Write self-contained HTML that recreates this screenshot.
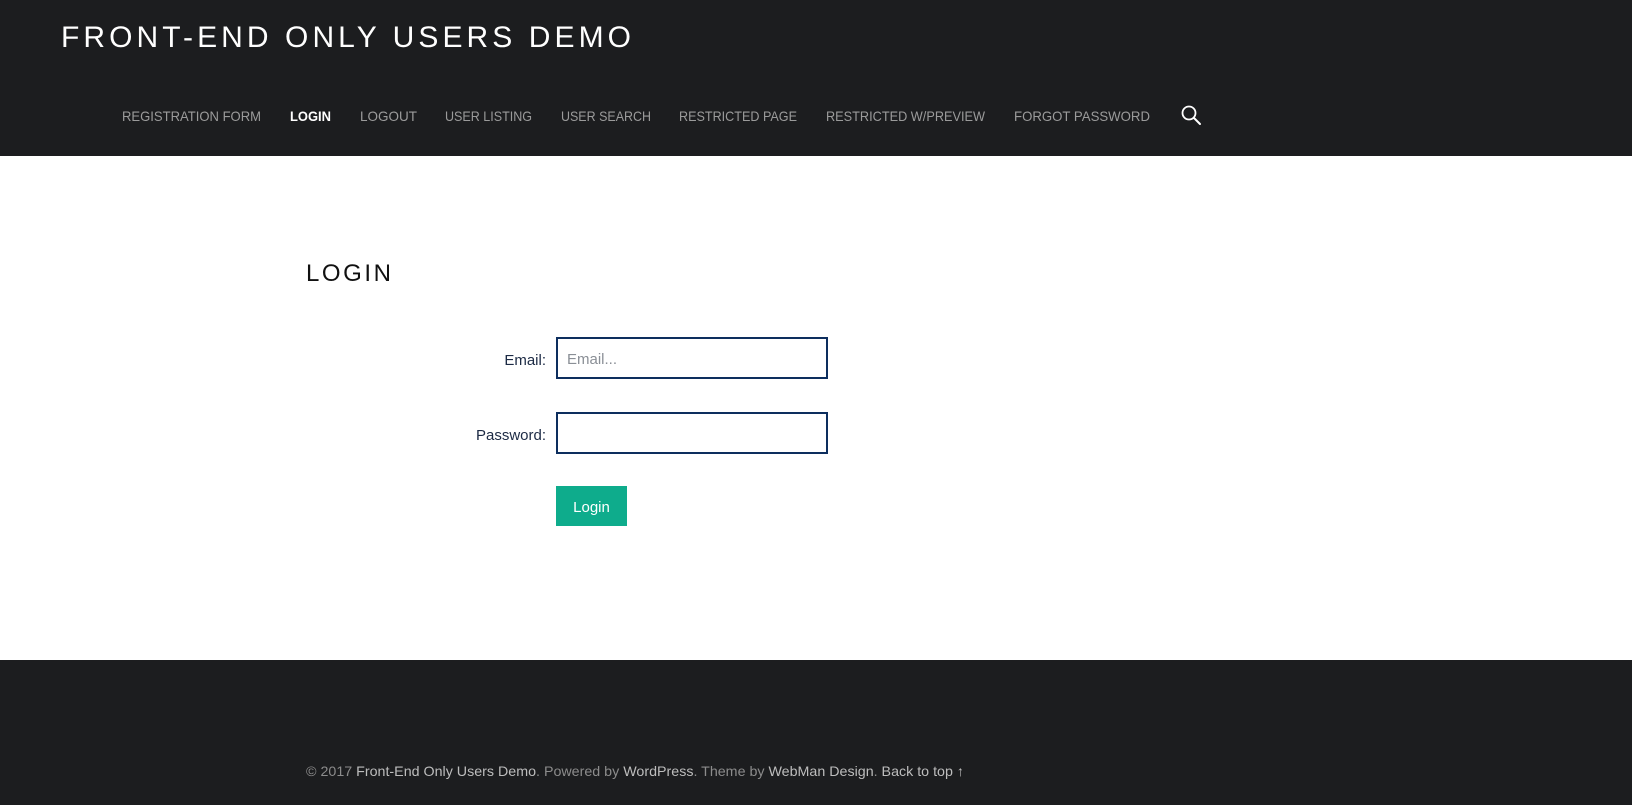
<!DOCTYPE html>
<html><head><meta charset="utf-8"><style>
html,body{margin:0;padding:0;width:1632px;height:805px;overflow:hidden;background:#fff;font-family:"Liberation Sans","DejaVu Sans",sans-serif}
svg{position:absolute;left:0;top:0}
</style></head><body>
<svg width="1632" height="805" viewBox="0 0 1632 805" xmlns="http://www.w3.org/2000/svg" font-family="Liberation Sans, DejaVu Sans, sans-serif">
<rect x="0" y="0" width="1632" height="156" fill="#1c1d1f"/>
<text x="61" y="47" fill="#fff" font-size="30" textLength="570" lengthAdjust="spacing">FRONT-END ONLY USERS DEMO</text>
<g font-size="14" fill="#9b9b9b">
<text x="122" y="121" textLength="139" lengthAdjust="spacingAndGlyphs">REGISTRATION FORM</text>
<text x="290" y="121" textLength="41" lengthAdjust="spacingAndGlyphs" fill="#fff" font-weight="bold">LOGIN</text>
<text x="360" y="121" textLength="57" lengthAdjust="spacingAndGlyphs">LOGOUT</text>
<text x="445" y="121" textLength="87" lengthAdjust="spacingAndGlyphs">USER LISTING</text>
<text x="561" y="121" textLength="90" lengthAdjust="spacingAndGlyphs">USER SEARCH</text>
<text x="679" y="121" textLength="118" lengthAdjust="spacingAndGlyphs">RESTRICTED PAGE</text>
<text x="826" y="121" textLength="159" lengthAdjust="spacingAndGlyphs">RESTRICTED W/PREVIEW</text>
<text x="1014" y="121" textLength="136" lengthAdjust="spacingAndGlyphs">FORGOT PASSWORD</text>
</g>
<circle cx="1189" cy="113" r="6.5" fill="none" stroke="#fff" stroke-width="1.8"/>
<line x1="1194" y1="118" x2="1200" y2="124" stroke="#fff" stroke-width="2" stroke-linecap="round"/>
<text x="306" y="281" fill="#111" font-size="24" textLength="85" lengthAdjust="spacing">LOGIN</text>
<text x="546" y="365" fill="#1c2a44" font-size="15" text-anchor="end">Email:</text>
<rect x="557" y="338" width="270" height="40" fill="#fff" stroke="#0d2e5e" stroke-width="2"/>
<text x="567" y="364" fill="#8a8f96" font-size="15">Email...</text>
<text x="546" y="440" fill="#1c2a44" font-size="15" text-anchor="end">Password:</text>
<rect x="557" y="413" width="270" height="40" fill="#fff" stroke="#0d2e5e" stroke-width="2"/>
<rect x="556" y="486" width="71" height="40" fill="#0eac8c"/>
<text x="591.5" y="512" fill="#fff" font-size="15" text-anchor="middle">Login</text>
<rect x="0" y="660" width="1632" height="145" fill="#1c1d1f"/>
<text x="306" y="776" font-size="14" fill="#8c8c8c" textLength="658" lengthAdjust="spacingAndGlyphs">© 2017 <tspan fill="#bdbdbd">Front-End Only Users Demo</tspan>. Powered by <tspan fill="#bdbdbd">WordPress</tspan>. Theme by <tspan fill="#bdbdbd">WebMan Design</tspan>. <tspan fill="#bdbdbd">Back to top ↑</tspan></text>
</svg>
</body></html>
